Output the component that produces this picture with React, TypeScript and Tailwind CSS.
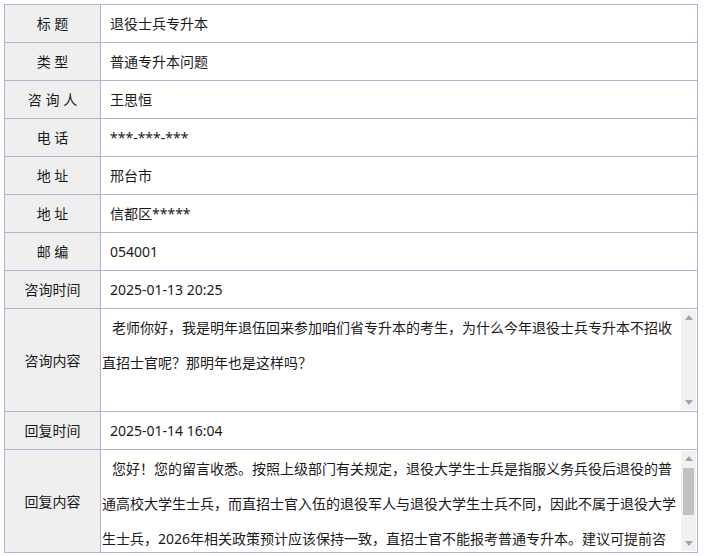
import React from "react";

const font = { fontFamily: '"Noto Sans", "Noto Sans CJK SC", sans-serif' };

function Label({ children }: { children: React.ReactNode }) {
  return (
    <div className="bg-[#efefef] border-r border-b border-[#c0abd2] flex items-center justify-center text-[14px] text-[#1a1a1a] whitespace-pre">
      {children}
    </div>
  );
}

function Value({ children }: { children: React.ReactNode }) {
  return (
    <div className="border-r border-b border-[#c0abd2] flex items-center pl-[9px] text-[14px] text-[#1a1a1a] whitespace-pre">
      {children}
    </div>
  );
}

function Arrow({ up }: { up?: boolean }) {
  return (
    <div className="h-[15px] flex items-center justify-center">
      <svg width="8" height="5" viewBox="0 0 8 5">
        {up ? (
          <polygon points="0,5 8,5 4,0" fill="#a3a3a3" />
        ) : (
          <polygon points="0,0 8,0 4,5" fill="#a3a3a3" />
        )}
      </svg>
    </div>
  );
}

function ScrollBox({ lines, thumb }: { lines: string[]; thumb?: boolean }) {
  return (
    <div className="border-r border-b border-[#c0abd2] p-[1px]">
      <div className="flex h-[100px] w-full">
        <div className="flex-1 overflow-hidden text-[14px] leading-[35px] text-[#1a1a1a] whitespace-pre">
          {lines.map((l, i) => (
            <div key={i} className={i === 0 ? "indent-[10px]" : ""}>
              {l}
            </div>
          ))}
        </div>
        <div className="w-[15px] bg-[#f1f1f1] flex flex-col">
          <Arrow up />
          <div className="flex-1 px-[2px] pt-[2px]">
            {thumb ? <div className="h-[47px] bg-[#c1c1c1]" /> : null}
          </div>
          <Arrow />
        </div>
      </div>
    </div>
  );
}

export default function App() {
  return (
    <div className="p-[4px] bg-white min-h-[556px]" style={font}>
      <div className="w-[694px] grid grid-cols-[96px_597px] grid-rows-[38px_38px_38px_38px_38px_38px_38px_38px_103px_38px_103px] border-l border-t border-[#c0abd2]">
        <Label>标 题</Label>
        <Value>退役士兵专升本</Value>
        <Label>类 型</Label>
        <Value>普通专升本问题</Value>
        <Label>咨 询 人</Label>
        <Value>王思恒</Value>
        <Label>电 话</Label>
        <Value>***-***-***</Value>
        <Label>地 址</Label>
        <Value>邢台市</Value>
        <Label>地 址</Label>
        <Value>信都区*****</Value>
        <Label>邮 编</Label>
        <Value>054001</Value>
        <Label>咨询时间</Label>
        <Value>2025-01-13 20:25</Value>
        <Label>咨询内容</Label>
        <ScrollBox
          lines={[
            "老师你好，我是明年退伍回来参加咱们省专升本的考生，为什么今年退役士兵专升本不招收",
            "直招士官呢？那明年也是这样吗？",
          ]}
        />
        <Label>回复时间</Label>
        <Value>2025-01-14 16:04</Value>
        <Label>回复内容</Label>
        <ScrollBox
          thumb
          lines={[
            "您好！您的留言收悉。按照上级部门有关规定，退役大学生士兵是指服义务兵役后退役的普",
            "通高校大学生士兵，而直招士官入伍的退役军人与退役大学生士兵不同，因此不属于退役大学",
            "生士兵，2026年相关政策预计应该保持一致，直招士官不能报考普通专升本。建议可提前咨",
          ]}
        />
      </div>
    </div>
  );
}
